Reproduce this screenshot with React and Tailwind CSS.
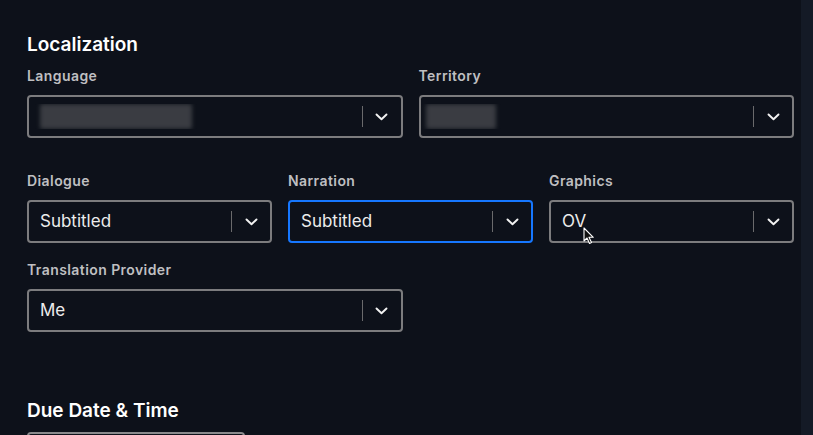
import React from "react";

function Chevron() {
  return (
    <svg width="13" height="8" viewBox="0 0 13 8" fill="none">
      <path d="M1.5 1.5 L6.5 6.3 L11.5 1.5" stroke="#f2f2f2" strokeWidth="1.9" strokeLinecap="round" strokeLinejoin="round" />
    </svg>
  );
}

function Select({ children, active = false, blurW = 0, blurX = 0 }) {
  return (
    <div
      className={
        "h-[43px] flex items-center rounded-[4px] border-2 " +
        (active ? "border-[#1677ff]" : "border-[#7c7c7e]")
      }
    >
      <div className="flex-1 pl-[11px] text-[17px] text-[#ececec] overflow-hidden">
        {blurW ? (
          <div
            className="h-[25px] bg-[#3a3c42] blur-[2px] rounded-[2px]"
            style={{ width: blurW, marginLeft: blurX }}
          />
        ) : (
          children
        )}
      </div>
      <div className="w-px h-[21px] bg-[#6a6a6c]" />
      <div className="w-[38px] flex items-center justify-center">
        <Chevron />
      </div>
    </div>
  );
}

function Label({ children }) {
  return (
    <div className="text-[14px] leading-[20px] font-semibold tracking-[0.03em] text-[#bfbfc1] mb-[9px]">
      {children}
    </div>
  );
}

export default function App() {
  return (
    <div className="w-[813px] h-[435px] overflow-hidden bg-[#0d111a] flex font-['Inter',sans-serif]">
      <div className="w-[801px] pl-[27px] pr-[7px] pt-[31px] relative">
        <h2 className="text-[19px] leading-[28px] font-semibold text-white">Localization</h2>
        <div className="grid grid-cols-2 gap-x-4 mt-[7px]">
          <div>
            <Label>Language</Label>
            <Select blurW={152} />
          </div>
          <div>
            <Label>Territory</Label>
            <Select blurW={70} blurX={-6} />
          </div>
        </div>
        <div className="grid grid-cols-3 gap-x-4 mt-[33px]">
          <div>
            <Label>Dialogue</Label>
            <Select>Subtitled</Select>
          </div>
          <div>
            <Label>Narration</Label>
            <Select active>Subtitled</Select>
          </div>
          <div>
            <Label>Graphics</Label>
            <Select>OV</Select>
          </div>
        </div>
        <div className="grid grid-cols-2 gap-x-4 mt-[17px]">
          <div>
            <Label>Translation Provider</Label>
            <Select>Me</Select>
          </div>
        </div>
        <h2 className="text-[19px] leading-[28px] font-semibold text-white mt-[65px]">Due Date &amp; Time</h2>
        <div className="mt-[7px] w-[218px] h-[40px] rounded-[4px] border-2 border-[#8a8a8c]" />
        <svg className="absolute left-[583px] top-[227px]" width="12" height="18" viewBox="0 0 12 18">
          <path d="M1 1 L1 14 L4 11 L6.5 16.5 L8.5 15.6 L6 10.3 L10.3 10.3 Z" fill="#111" stroke="#fff" strokeWidth="1.1" strokeLinejoin="round" />
        </svg>
      </div>
      <div className="flex-1 bg-[#141a26]" />
    </div>
  );
}
